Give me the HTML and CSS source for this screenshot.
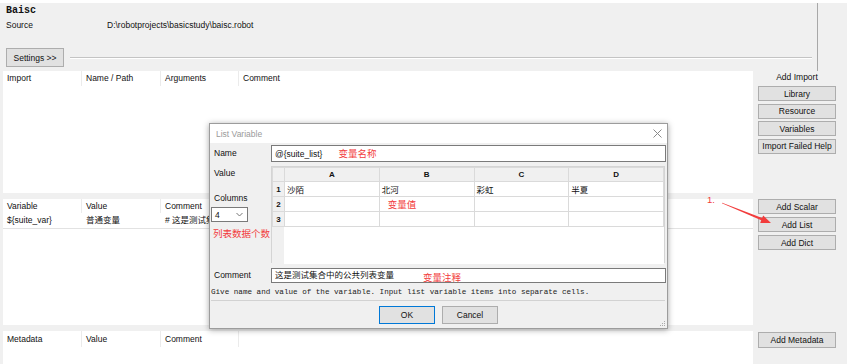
FILE: index.html
```html
<!DOCTYPE html>
<html lang="en">
<head>
    <meta charset="UTF-8">
    <meta name="viewport" content="width=device-width, initial-scale=1.0">
    <title>Baisc</title>
    <link rel="stylesheet" href="styles.css">
</head>
<body>
    <div class="strip"></div>

    <div class="top">
        <div class="title">Baisc</div>
        <div class="source">
            <span class="source-lbl">Source</span>
            <span>D:\robotprojects\basicstudy\baisc.robot</span>
        </div>
        <div class="settings-row">
            <button class="btn settings">Settings &gt;&gt;</button>
            <div class="rule"></div>
        </div>
    </div>

    <!-- imports -->
    <div class="section imports">
        <div class="pane">
            <div class="thead">
                <span>Import</span><span>Name / Path</span><span>Arguments</span><span>Comment</span>
            </div>
        </div>
        <div class="side">
            <div class="side-title">Add Import</div>
            <button class="btn side-btn">Library</button>
            <button class="btn side-btn">Resource</button>
            <button class="btn side-btn">Variables</button>
            <button class="btn side-btn">Import Failed Help</button>
        </div>
    </div>

    <!-- variables -->
    <div class="section variables">
        <div class="pane">
            <div class="thead thead-var">
                <span>Variable</span><span>Value</span><span>Comment</span><span></span>
            </div>
            <div class="trow">
                <span>${suite_var}</span><span>普通变量</span><span># 这是测试集合中的公共变量</span><span></span>
            </div>
        </div>
        <div class="side side-var">
            <button class="btn side-btn">Add Scalar</button>
            <button class="btn side-btn">Add List</button>
            <button class="btn side-btn">Add Dict</button>
        </div>
    </div>

    <!-- metadata -->
    <div class="section metadata">
        <div class="pane">
            <div class="thead thead-meta">
                <span>Metadata</span><span>Value</span><span>Comment</span><span></span>
            </div>
        </div>
        <div class="side side-meta">
            <button class="btn side-btn meta-btn">Add Metadata</button>
        </div>
    </div>

    <!-- annotation arrow -->
    <span class="note step">1.</span>
    <svg class="arrow" width="80" height="40" viewBox="0 0 80 40">
        <polygon points="22.1,12.7 62.15,28.09 63.2,25.5 71,33 60.2,32.9 61.25,30.31 21.9,13.3" fill="#f23c3c"/>
    </svg>

    <!-- List Variable dialog -->
    <div class="dialog">
        <div class="dlg-head">
            <span>List Variable</span>
            <svg class="close" width="9" height="9" viewBox="0 0 9 9">
                <path d="M0.5 0.5 L8.5 8.5 M8.5 0.5 L0.5 8.5" stroke="#8a8a8a" stroke-width="1"/>
            </svg>
        </div>

        <div class="dlg-form">
            <div class="lbl lbl-name">Name</div>
            <div class="field field-name">@{suite_list}<span class="note note-name">变量名称</span></div>

            <div class="lbl value-col">
                <div class="value-lbl">Value</div>
                <div class="cols-lbl">Columns</div>
                <div class="select">
                    <span>4</span>
                    <svg width="7" height="5" viewBox="0 0 7 5"><path d="M0.5 1 L3.5 4 L6.5 1" fill="none" stroke="#777" stroke-width="1"/></svg>
                </div>
                <div class="note note-cols">列表数据个数</div>
            </div>
            <div class="grid">
                <table class="cells">
                    <tr><th class="rh"></th><th>A</th><th>B</th><th>C</th><th>D</th></tr>
                    <tr><th class="rh">1</th><td>沙陌</td><td>北河</td><td>彩虹</td><td>半夏</td></tr>
                    <tr><th class="rh">2</th><td></td><td><span class="note note-val">变量值</span></td><td></td><td></td></tr>
                    <tr><th class="rh">3</th><td></td><td></td><td></td><td></td></tr>
                </table>
                <div class="grid-fill"></div>
            </div>

            <div class="lbl lbl-comment">Comment</div>
            <div class="field field-comment">这是测试集合中的公共列表变量</div>
        </div>

        <div class="help">Give name and value of the variable. Input list variable items into separate cells.</div>
        <div class="dlg-rule"></div>
        <div class="dlg-btns">
            <button class="btn dlg-btn ok">OK</button>
            <button class="btn dlg-btn">Cancel</button>
        </div>

        <span class="note note-comment">变量注释</span>
        <svg class="grip" width="7" height="7" viewBox="0 0 7 7">
            <rect x="5" y="1" width="1" height="1" fill="#aaa"/>
            <rect x="3" y="3" width="1" height="1" fill="#aaa"/>
            <rect x="5" y="3" width="1" height="1" fill="#aaa"/>
            <rect x="1" y="5" width="1" height="1" fill="#aaa"/>
            <rect x="3" y="5" width="1" height="1" fill="#aaa"/>
            <rect x="5" y="5" width="1" height="1" fill="#aaa"/>
        </svg>
    </div>
</body>
</html>
```

FILE: styles.css
```css
* {
    box-sizing: border-box;
}

body {
    margin: 0;
    width: 847px;
    height: 364px;
    overflow: hidden;
    position: relative;
    background-color: #f0f0f0;
    font-family: "Liberation Sans", "Noto Sans CJK SC", sans-serif;
    font-size: 8.5px;
    color: #111;
}

.strip {
    height: 3px;
    background-color: #fff;
}

/* header part */
.top {
    height: 68px;
    width: 818px;
    border-right: 1px solid #a8a8a8;
    padding: 1px 0 0 6px;
}
.title {
    font-family: "Liberation Mono", monospace;
    font-weight: bold;
    font-size: 10px;
    line-height: 14px;
}
.source {
    display: flex;
    line-height: 12px;
    margin-top: 1px;
}
.source-lbl {
    width: 101px;
}
.settings-row {
    display: flex;
    align-items: center;
    margin-top: 17px;
}
.rule {
    flex: 1;
    margin: 0 5px 0 6px;
    border-top: 1px solid #c4c4c4;
    border-bottom: 1px solid #fff;
}

.btn {
    background-color: #e1e1e1;
    border: 1px solid #adadad;
    font-family: inherit;
    font-size: 8.5px;
    color: #111;
    padding: 0;
    margin: 0;
}
.settings {
    width: 58px;
    height: 19px;
}

/* sections */
.section {
    display: grid;
    grid-template-columns: 750px 1fr;
    padding-left: 3px;
}
.pane {
    background-color: #fff;
}
.imports {
    height: 122px;
    margin-bottom: 6px;
}
.variables {
    height: 126px;
    margin-bottom: 6px;
}
.metadata {
    height: 33px;
}

.thead, .trow {
    display: grid;
    grid-template-columns: 79px 79px 78px 1fr;
    height: 15px;
    line-height: 15px;
}
.thead span {
    padding-left: 4px;
    border-right: 1px solid #ebebeb;
}
.thead span:last-child {
    border-right: none;
}
.thead-var {
    height: 14px;
    line-height: 14px;
}
.thead-meta {
    height: 16px;
    line-height: 16px;
}
.trow {
    height: 16px;
    border-bottom: 1px solid #e2e2e2;
}
.trow span {
    padding-left: 4px;
    white-space: nowrap;
    overflow: hidden;
}

.side {
    display: flex;
    flex-direction: column;
    padding: 0 11px 0 5px;
}
.side-title {
    text-align: center;
    line-height: 13px;
    margin-bottom: 2px;
}
.side-btn {
    height: 15px;
    margin-bottom: 2.5px;
}
.side-var .side-btn {
    margin-bottom: 3px;
}
.side-meta {
    padding-top: 1px;
}
.meta-btn {
    height: 16px;
}

/* red notes */
.note {
    color: #f23c3c;
    font-family: "Noto Sans CJK SC", "Liberation Sans", sans-serif;
    font-size: 9.5px;
}
.step {
    position: absolute;
    left: 707px;
    top: 194px;
    font-family: "Liberation Sans", sans-serif;
}
.arrow {
    position: absolute;
    left: 700px;
    top: 190px;
}

/* dialog */
.dialog {
    position: absolute;
    left: 209px;
    top: 123px;
    width: 459px;
    height: 206px;
    background-color: #f0f0f0;
    border: 1px solid #9c9c9c;
    box-shadow: 0 1px 6px rgba(0, 0, 0, 0.35);
}
.dlg-head {
    display: flex;
    align-items: center;
    justify-content: space-between;
    height: 19px;
    background-color: #fff;
    padding: 0 5px 0 6px;
    color: #9a9a9a;
}
.dlg-form {
    display: grid;
    grid-template-columns: 61px 396px;
    padding-top: 2px;
}
.lbl {
    padding-left: 4px;
}
.lbl-name {
    line-height: 17px;
}
.field {
    background-color: #fff;
    border: 1px solid #7a7a7a;
    padding-left: 3px;
    white-space: nowrap;
}
.field-name {
    height: 17px;
    line-height: 15px;
    margin-right: 1px;
}
.note-name {
    margin-left: 16px;
}

.value-col {
    margin-top: 4px;
    display: flex;
    flex-direction: column;
    align-items: flex-start;
}
.value-lbl {
    line-height: 14px;
}
.cols-lbl {
    line-height: 14px;
    margin-top: 11px;
}
.select {
    display: flex;
    align-items: center;
    justify-content: space-between;
    width: 37px;
    height: 15px;
    margin: 2px 0 0 -3px;
    padding: 0 4px 0 3px;
    background-color: #fff;
    border: 1px solid #7a7a7a;
}
.note-cols {
    line-height: 13px;
    margin: 5px 0 0 -1px;
}

.grid {
    margin-top: 4px;
    width: 394px;
    height: 97px;
    border: 1px solid #d4d4d4;
}
.cells {
    width: 392px;
    border-collapse: collapse;
    table-layout: fixed;
}
.cells th, .cells td {
    border: 1px solid #dadada;
    padding: 0;
}
.cells th {
    height: 14px;
    background-color: #f0f0f0;
    font-size: 8px;
    font-weight: bold;
    text-align: center;
}
.cells td {
    height: 15px;
    background-color: #fff;
    padding-left: 2px;
    white-space: nowrap;
}
.cells .rh {
    width: 12px;
}
.note-val {
    margin-left: 6px;
}
.grid-fill {
    height: 37px;
    background-color: #fff;
    border-left: 12px solid #f0f0f0;
}

.lbl-comment {
    margin-top: 5px;
    line-height: 15px;
}
.field-comment {
    margin-top: 5px;
    height: 15px;
    line-height: 13px;
    margin-right: 1px;
}

.help {
    margin-top: 4px;
    padding-left: 1px;
    font-family: "Liberation Mono", monospace;
    font-size: 7.6px;
    line-height: 10px;
    color: #222;
    white-space: nowrap;
}
.dlg-rule {
    margin: 3px 2px 0 1px;
    border-top: 1px solid #d2d2d2;
}
.dlg-btns {
    display: flex;
    justify-content: center;
    gap: 7px;
    margin-top: 5px;
}
.dlg-btn {
    width: 56px;
    height: 18px;
}
.ok {
    border-color: #0078d7;
}

.note-comment {
    position: absolute;
    left: 213px;
    top: 147px;
    line-height: 13px;
}
.grip {
    position: absolute;
    right: 1px;
    bottom: 1px;
}
```
